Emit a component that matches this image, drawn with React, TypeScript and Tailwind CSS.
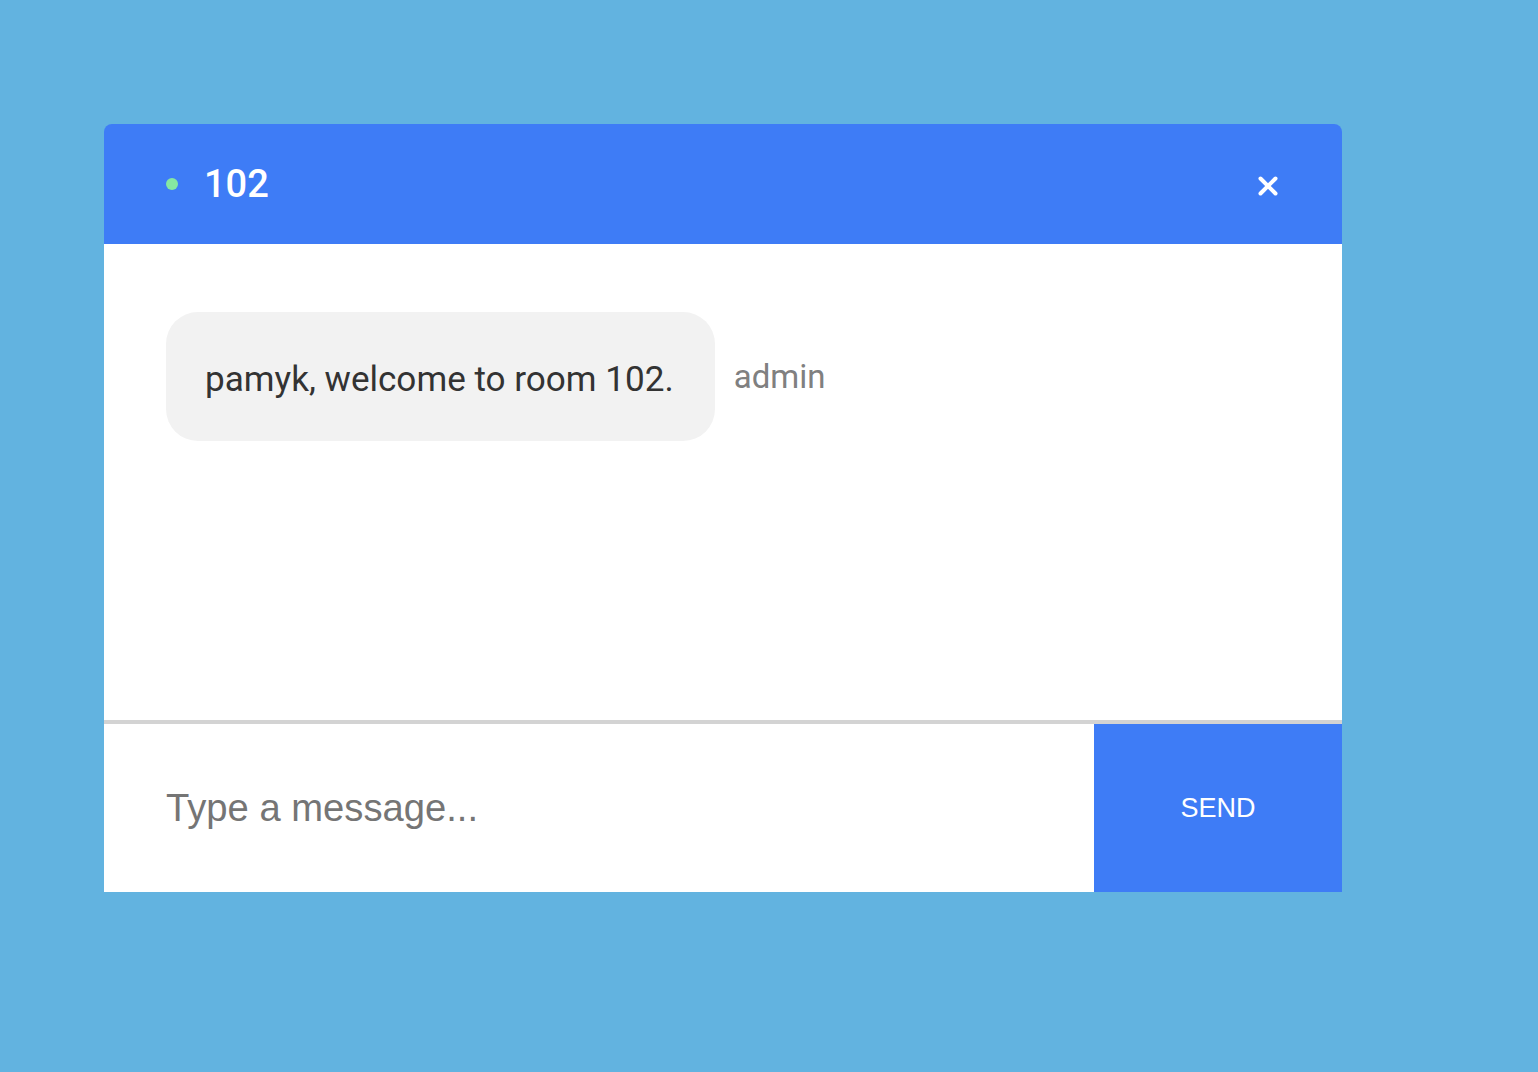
import { X } from 'lucide-react';

const messages = [{ id: 1, text: 'pamyk, welcome to room 102.', author: 'admin' }];

export default function App() {
  return (
    <div className="min-h-screen w-full bg-[#62b3e0] pt-[124px] pl-[104px]">
      <div className="w-[1238px] flex flex-col">
        <div className="h-[120px] bg-[#3e7cf6] rounded-t-[8px] flex items-center justify-between px-[62px]">
          <div className="flex items-center">
            <span className="w-[12px] h-[12px] rounded-full bg-[#86e7a2]" />
            <span className="ml-[26px] text-white text-[38px] font-medium font-['Roboto',sans-serif] leading-none">
              102
            </span>
          </div>
          <button className="text-white -mr-[3px] mt-[3px]">
            <X size={30} strokeWidth={3.2} />
          </button>
        </div>

        <div className="h-[476px] bg-white px-[62px] pt-[68px] flex flex-col gap-4">
          {messages.map((m) => (
            <div key={m.id} className="flex items-center">
              <div className="bg-[#f2f2f2] rounded-[32px] pl-[39px] pr-[41px] pt-[5px] h-[129px] flex items-center text-[35.1px] text-[#333333] font-['Roboto',sans-serif]">
                {m.text}
              </div>
              <span className="ml-[19px] text-[33px] text-[#808080] font-['Roboto',sans-serif]">
                {m.author}
              </span>
            </div>
          ))}
        </div>

        <form className="h-[172px] bg-white border-t-4 border-[#d3d3d3] flex">
          <input
            className="flex-1 h-full pl-[62px] outline-none text-[38.2px] font-['Liberation_Sans',Arial,sans-serif] placeholder:text-[#757575] text-[#333]"
            placeholder="Type a message..."
          />
          <button
            type="button"
            className="w-[248px] h-full bg-[#3e7cf6] text-white text-[27px] font-['Liberation_Sans',Arial,sans-serif]"
          >
            SEND
          </button>
        </form>
      </div>
    </div>
  );
}
